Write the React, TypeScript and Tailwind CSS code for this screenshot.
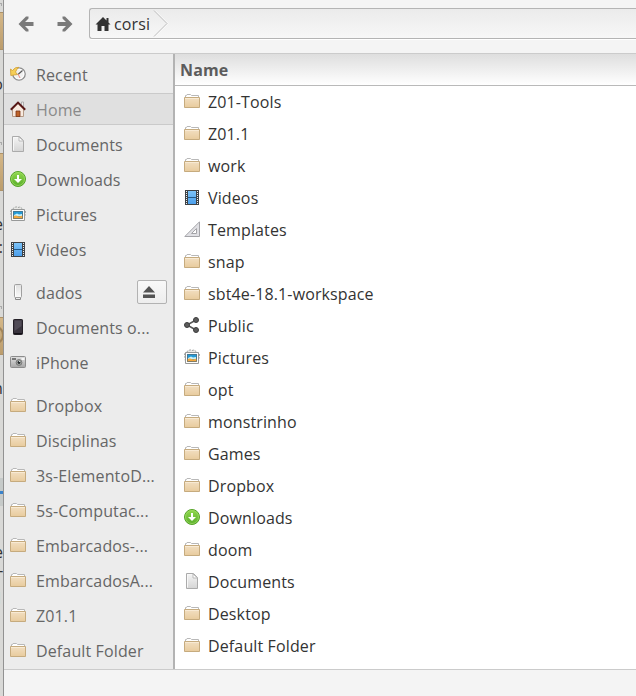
import type { ReactNode } from "react";

type IconName =
  | "folder" | "recent" | "home" | "doc" | "down" | "pics" | "video"
  | "usb" | "phone" | "camera" | "template" | "share";

const glyphs: Record<IconName, ReactNode> = {
  folder: (
    <>
      <path d="M1.5 5V2.500H2.500L3 1.500H6.500L7.500 2.500H14.500V5" fill="#fff" stroke="#b8b8b8" />
      <path d="M.5 4.500H15.500V14.500H.5Z" fill="url(#tan)" stroke="#c6ab7e" />
      <path d="M1 5.500H15" stroke="#f8ead4" />
    </>
  ),
  recent: (
    <>
      <circle cx="9" cy="8" r="6.200" fill="#f1f1f1" stroke="#8d8d8d" strokeWidth="1.300" />
      <circle cx="9" cy="8" r="4.800" fill="none" stroke="#fff" />
      <path d="M8 8.500L12.500 4.500" stroke="#555" strokeWidth="1.100" />
      <path d="M8 8L10 12" stroke="#ef8a80" />
      <path d="M.5 3L2.500 4.500Q5 .8 9 1.300Q6.500 3 5.500 6L7.500 8.500L.8 9.500Z" fill="#f6cf58" stroke="#cf9d35" strokeWidth=".8" />
    </>
  ),
  home: (
    <>
      <path d="M11.500 1H13.500V6H11.500Z" fill="#eee" stroke="#999" strokeWidth=".7" />
      <path d="M2.500 8L8 2.500L13.500 8V15.500H2.500Z" fill="#f8eadf" stroke="#b49a86" />
      <path d="M6 10H10V15.500H6Z" fill="#bd6329" stroke="#793415" strokeWidth=".8" />
      <path d="M.8 8.800L8 1.600L15.200 8.800" fill="none" stroke="#571716" strokeWidth="2" />
    </>
  ),
  doc: (
    <>
      <path d="M2.500 .5H9.500L13.500 4.500V15.500H2.500Z" fill="url(#paper)" stroke="#ababab" />
      <path d="M9 1V5H13.500Z" fill="#fff" stroke="#b6b6b6" strokeWidth=".9" />
      <path d="M3.500 14.500V1.500H8" fill="none" stroke="#f8f8f8" />
    </>
  ),
  down: (
    <>
      <circle cx="8" cy="8" r="7.500" fill="url(#green)" stroke="#55a329" />
      <circle cx="8" cy="8" r="6.500" fill="none" stroke="#a3de68" strokeWidth=".7" />
      <path d="M7 4H9V8H12L8 12L4 8H7Z" fill="#fff" />
    </>
  ),
  pics: (
    <>
      <path d="M.5 5L3 2.500L6 .8L8 1.500L10 1L15.500 5L14.500 12.500H1.500Z" fill="#e9e9e7" stroke="#9fa3a1" strokeDasharray="2 1" />
      <path d="M1.500 3.500H14.500V14.500H1.500Z" fill="#fcfcfc" stroke="#979999" />
      <path d="M3 5H13V13H3Z" fill="#249ad6" />
      <path d="M4 9L7 7.500L9 8.500L12 8V10H4Z" fill="#c8f0f8" />
      <path d="M3 10L6 9.500L9 10.500L13 9.500V13H3Z" fill="#f4a83c" />
      <path d="M3.500 5.500H12.500V12.500H3.500Z" fill="none" stroke="#506a77" strokeOpacity=".7" />
    </>
  ),
  video: (
    <g transform="translate(0 1)">
      <path d="M1 0H15V15H1Z" fill="#3e4246" />
      <path d="M4 1H12V14H4Z" fill="url(#blue)" />
      <path d="M4 7.500H12" stroke="#235987" />
      <path d="M2.500 1V14M13.500 1V14" stroke="#f1f1f1" strokeDasharray="1 1" />
    </g>
  ),
  usb: (
    <>
      <path d="M5.500 12V15.500H10.500V12" fill="#eee" stroke="#888" />
      <rect x="4.500" y=".5" width="7" height="13" rx="1" fill="url(#usb)" stroke="#a0a0a0" />
      <path d="M5.500 2V12" stroke="#fff" />
    </>
  ),
  phone: (
    <>
      <rect x="3.500" y=".5" width="9" height="15" rx=".7" fill="#39343e" stroke="#242027" />
      <path d="M4.500 1.500H11.500V7L4.500 12Z" fill="#66606b" opacity=".55" />
      <path d="M4 14.500H12" stroke="#151218" />
    </>
  ),
  camera: (
    <>
      <rect x=".5" y="2.500" width="15" height="11" rx="1" fill="url(#metal)" stroke="#8c8c8c" />
      <path d="M2 4H6V6H2Z" fill="#777" />
      <path d="M11.500 4H14.500V6H11.500Z" fill="#f6f6f6" />
      <circle cx="9" cy="8.500" r="2.900" fill="#a4a8a4" stroke="#6b6b6b" strokeWidth=".8" />
      <circle cx="9" cy="8.500" r="1.400" fill="#25292c" />
      <circle cx="9.500" cy="7.500" r=".6" fill="#e6f0f0" />
    </>
  ),
  template: (
    <>
      <path d="M.8 15.500L15.500 .8V15.500Z" fill="#e0e0e4" stroke="#a4a4a8" />
      <path d="M7.500 12.500L12.500 7.500V12.500Z" fill="#fff" stroke="#a4a4a8" />
    </>
  ),
  share: (
    <>
      <path d="M12 3L3 8L12 13" fill="none" stroke="#555" strokeWidth="1.500" />
      <g fill="#5c5c5c" stroke="#3d3d3d">
        <circle cx="12" cy="3" r="2.500" /><circle cx="3" cy="8" r="2.500" /><circle cx="12" cy="13" r="2.500" />
      </g>
    </>
  ),
};

function Icon({ name }: { name: IconName }) {
  return <svg viewBox="0 0 16 16" className="size-4 shrink-0">{glyphs[name]}</svg>;
}

function Gradients() {
  const fills = [
    ["tan", "#f2dfc2", "#e8cb9d"],
    ["paper", "#f5f5f5", "#d5d5d5"],
    ["green", "#91d84f", "#58ad29"],
    ["blue", "#7cc3f8", "#4c9fec"],
    ["usb", "#e0e0e0", "#fbfbfb"],
    ["metal", "#e0e0e0", "#a6a6a6"],
  ];
  return (
    <svg className="absolute size-0">
      <defs>
        {fills.map(([id, a, b]) => (
          <linearGradient key={id} id={id} x1="0" y1="0" x2="0" y2="1">
            <stop stopColor={a} /><stop offset="1" stopColor={b} />
          </linearGradient>
        ))}
      </defs>
    </svg>
  );
}

type Entry = [IconName, string];
const places: Entry[][] = [
  [["recent", "Recent"], ["home", "Home"], ["doc", "Documents"], ["down", "Downloads"], ["pics", "Pictures"], ["video", "Videos"]],
  [["usb", "dados"], ["phone", "Documents o..."], ["camera", "iPhone"]],
  [["folder", "Dropbox"], ["folder", "Disciplinas"], ["folder", "3s-ElementoD..."], ["folder", "5s-Computac..."], ["folder", "Embarcados-..."], ["folder", "EmbarcadosA..."], ["folder", "Z01.1"], ["folder", "Default Folder"]],
];
const files: Entry[] = [
  ["folder", "Z01-Tools"], ["folder", "Z01.1"], ["folder", "work"], ["video", "Videos"], ["template", "Templates"],
  ["folder", "snap"], ["folder", "sbt4e-18.1-workspace"], ["share", "Public"], ["pics", "Pictures"], ["folder", "opt"],
  ["folder", "monstrinho"], ["folder", "Games"], ["folder", "Dropbox"], ["down", "Downloads"], ["folder", "doom"],
  ["doc", "Documents"], ["folder", "Desktop"], ["folder", "Default Folder"],
];

// Sliver of the file manager window lying behind this one
function Backdrop() {
  const words: [string, number][] = [["o", 72], ["e", 212], ["s:", 235], ["n", 376], ["e", 540], ["T", 565], ["1", 586]];
  return (
    <div className="relative w-1 shrink-0 overflow-hidden border-r border-[#929292] bg-[#d9d9d7]">
      {[12, 153, 317].map((y) => (
        <div key={y} className="absolute left-0 h-[38px] w-full border-y border-[#ae9268] bg-linear-to-b from-[#d4b788] to-[#bc9d6d]" style={{ top: y }} />
      ))}
      {[3, 142, 306].map((y) => (
        <div key={y} className="absolute -left-1 h-[3px] w-[6px] border-t border-r border-[#aaa]" style={{ top: y }} />
      ))}
      <div className="absolute top-[325px] -left-4 size-5 rounded-full border-2 border-[#a18459]" />
      <div className="absolute top-[478px] left-0 h-7 w-full bg-[#c6cac9]" />
      <div className="absolute top-[491px] left-0 h-[3px] w-full bg-[#3a83cb]" />
      {words.map(([t, y]) => (
        <span key={y} className="absolute right-0 text-base leading-6 text-[#333]" style={{ top: y }}>{t}</span>
      ))}
    </div>
  );
}

function BackArrow({ flip }: { flip?: boolean }) {
  return (
    <svg viewBox="0 0 16 16" className={flip ? "size-4 -scale-x-100" : "size-4"}>
      <path d="M8 .5H10.500V2.500L7 6H15.500V10H7L10.500 13.500V15.500H8L.5 8Z" fill="#7a7a7a" />
    </svg>
  );
}

export default function App() {
  return (
    <div className="relative flex h-[696px] w-[636px] overflow-hidden bg-[#f4f4f4] font-['Open_Sans','Noto_Sans',sans-serif] text-base tracking-[0.13px] text-[#333]">
      <Gradients />
      <Backdrop />
      <main className="flex min-w-0 flex-1 flex-col">
        <header className="flex h-[54px] shrink-0 border-b border-[#cbcbcb] pl-[14px]">
          <div className="flex w-[71px] gap-[23px] pt-4">
            <BackArrow />
            <BackArrow flip />
          </div>
          <div className="mt-2 flex h-[31px] flex-1 items-center rounded-l-[3px] border border-r-0 border-[#b4b4b4] bg-linear-to-b from-[#ebebeb] to-[#f7f7f7] pl-[5px] shadow-[0_1px_0_#fff]">
            <svg viewBox="0 0 16 16" className="size-4 shrink-0">
              <path d="M8 1L.5 8.500H2.500V15H6.500V10H9.500V15H13.500V8.500H15.500L13.500 6.500V2H11.500V4.500Z" fill="#333" />
            </svg>
            <span className="ml-[3px] w-[39px] leading-6">corsi</span>
            <svg viewBox="0 0 16 29" className="h-[29px] w-4 shrink-0" fill="none">
              <path d="M2 1.500L15 14.500L2 27.500" stroke="#fff" /><path d="M1 1.500L14 14.500L1 27.500" stroke="#bdbdbd" />
            </svg>
          </div>
        </header>
        <section className="flex h-[615px] shrink-0">
          <nav className="flex w-[171px] flex-col gap-[11px] border-r-2 border-[#b3b3b3] bg-[#ececec] pt-1 text-[#666]">
            {places.map((group, i) => (
              <div key={i} className="flex flex-col gap-[3px]">
                {group.map(([icon, label]) => (
                  <div key={label} className={"flex h-8 items-center border-y pl-1.5 " + (label === "Home" ? "border-[#cacaca] bg-[#e0e0e0] text-[#8a8a8a]" : "border-transparent")}>
                    <Icon name={icon} />
                    <span className="mt-[2px] ml-2.5 flex-1 leading-6 whitespace-nowrap">{label}</span>
                    {label === "dados" && (
                      <button className="mr-1.5 flex h-6 w-[30px] items-center rounded-[2px] border border-[#b2b2b2] bg-linear-to-b from-[#f8f8f8] to-[#ededed] pl-[5px]">
                        <svg viewBox="0 0 12 12" className="size-3"><path d="M6 0L12 6.500H0ZM0 8.500H12V12H0Z" fill="#535353" /></svg>
                      </button>
                    )}
                  </div>
                ))}
              </div>
            ))}
          </nav>
          <div className="flex-1 bg-white">
            <div className="h-8 border-b border-[#b9b9b9] bg-linear-to-b from-[#dedede] to-white pl-[5px] leading-8 font-bold text-[#5c5c5c]">Name</div>
            {files.map(([icon, label]) => (
              <div key={label} className="flex h-8 items-center gap-2 pb-0.5 pl-[9px]">
                <Icon name={icon} />
                <span className="mt-[2px] leading-6">{label}</span>
              </div>
            ))}
          </div>
        </section>
        <footer className="flex-1 border-t border-[#cbcbcb] bg-[#f4f4f4]" />
      </main>
    </div>
  );
}
